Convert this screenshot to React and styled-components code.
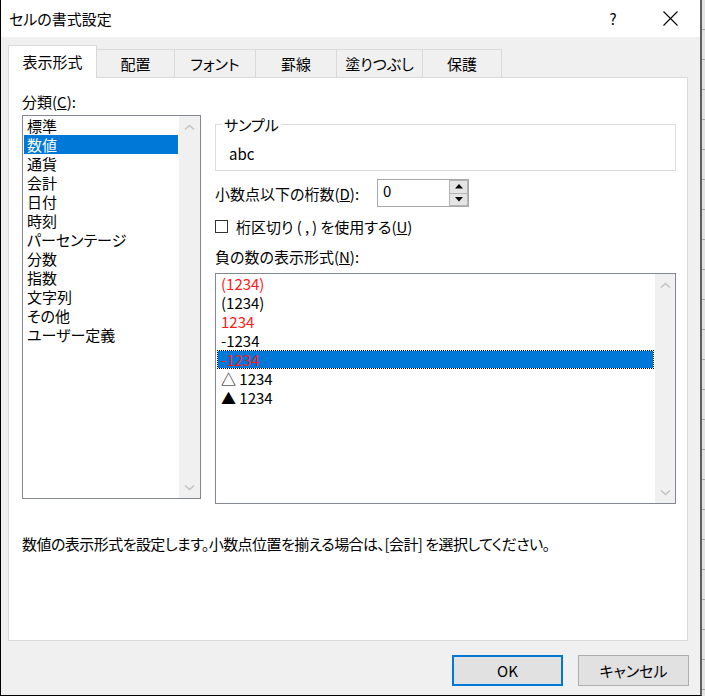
import React from 'react'
import styled, { createGlobalStyle } from 'styled-components'

const GlobalStyle = createGlobalStyle`
    html, body {
        margin: 0;
        padding: 0;
    }
    body {
        width: 705px;
        height: 696px;
        overflow: hidden;
        background: #d9d9d9;
        font-family: "Noto Sans CJK JP", "Noto Sans", sans-serif;
        font-size: 15px;
        font-feature-settings: "palt";
        color: #000;
    }
    * {
        box-sizing: border-box;
    }
`

const Screen = styled.div`
    display: flex;
    width: 705px;
    height: 696px;
`

const Window = styled.div`
    width: 702px;
    height: 696px;
    display: flex;
    flex-direction: column;
    background: #f0f0f0;
    border-left: 1px solid #000;
    border-bottom: 1px solid #000;
    border-right: 2px solid #5f5f5f;
`

const SheetEdge = styled.div`
    flex: 1;
    background: repeating-linear-gradient(
        to bottom,
        #e3e3e3 0,
        #e3e3e3 29px,
        #a8a8a8 29px,
        #a8a8a8 30px
    );
`

const TitleBar = styled.div`
    height: 37px;
    display: flex;
    align-items: center;
    background: #fff;
    padding: 0 7px 0 8px;
`

const Title = styled.span`
    flex: 1;
    line-height: 19px;
`

const CaptionButton = styled.div`
    width: 46px;
    height: 37px;
    display: flex;
    align-items: center;
    justify-content: center;
    margin-right: ${p => p.$gap || 0}px;
    font-size: 15px;
`

const Body = styled.div`
    flex: 1;
    display: flex;
    flex-direction: column;
    padding: 8px 12px 0 7px;
`

const TabRow = styled.div`
    display: flex;
    align-items: flex-end;
    height: 32px;
`

const Tab = styled.div`
    width: ${p => p.$w}px;
    height: ${p => (p.$active ? 33 : 28)}px;
    margin-left: ${p => (p.$first ? 0 : -1)}px;
    margin-bottom: ${p => (p.$active ? -1 : 0)}px;
    position: relative;
    z-index: ${p => (p.$active ? 2 : 1)};
    display: flex;
    align-items: center;
    justify-content: center;
    padding-bottom: ${p => (p.$active ? 2 : 0)}px;
    background: ${p => (p.$active ? '#fff' : '#f0f0f0')};
    border: 1px solid #d9d9d9;
    border-bottom: none;
    line-height: 19px;
`

const Panel = styled.div`
    height: 564px;
    background: #fff;
    border: 1px solid #d9d9d9;
    padding: 14px 11px 0 13px;
`

const Columns = styled.div`
    display: grid;
    grid-template-columns: 179px 461px;
    column-gap: 14px;
`

const Column = styled.div`
    display: flex;
    flex-direction: column;
    padding-top: ${p => p.$top || 0}px;
`

const Label = styled.div`
    line-height: 19px;
    height: 19px;
    margin-bottom: ${p => p.$gap || 0}px;
    white-space: nowrap;
`

const ListBox = styled.div`
    display: flex;
    height: ${p => p.$h}px;
    margin-top: ${p => p.$top || 0}px;
    border: 1px solid #828790;
    background: #fff;
`

const ListItems = styled.div`
    flex: 1;
    display: flex;
    flex-direction: column;
    padding-top: ${p => p.$top}px;
`

const ListItem = styled.div`
    height: 19px;
    line-height: 17px;
    margin: 0 1px;
    padding-left: ${p => p.$inset}px;
    border: 1px ${p => (p.$focus ? 'dotted #000' : 'solid transparent')};
    white-space: nowrap;
    color: ${p => (p.$red ? '#ff1a1a' : p.$selected && !p.$focus ? '#fff' : '#000')};
    background: ${p =>
        p.$focus
            ? 'linear-gradient(#0078d7, #0078d7) padding-box, #fff'
            : p.$selected
            ? '#0078d7'
            : 'transparent'};
`

const ScrollTrack = styled.div`
    width: ${p => p.$w}px;
    display: flex;
    flex-direction: column;
    justify-content: space-between;
    background: #f0f0f0;
`

const ArrowCell = styled.div`
    height: 22px;
    display: flex;
    align-items: center;
    justify-content: center;
`

const SampleGroup = styled.fieldset`
    margin: 0;
    min-width: 0;
    height: 56px;
    border: 1px solid #dcdcdc;
    padding: 0 13px 5px 13px;
`

const SampleLegend = styled.legend`
    margin-left: -7px;
    padding: 0 2px;
    line-height: 19px;
`

const SampleText = styled.div`
    line-height: 19px;
    padding-top: 10px;
`

const FieldRow = styled.div`
    display: flex;
    align-items: center;
    height: ${p => p.$h}px;
    margin-top: ${p => p.$top}px;
`

const FieldLabel = styled.div`
    width: 162px;
    line-height: 19px;
    white-space: nowrap;
`

const Spinner = styled.div`
    width: 92px;
    height: 28px;
    display: flex;
    border: 1px solid #a8a8a8;
    background: #fff;
`

const SpinValue = styled.div`
    flex: 1;
    padding-left: 5px;
    line-height: 22px;
`

const SpinButtons = styled.div`
    width: 19px;
    display: flex;
    flex-direction: column;
`

const SpinButton = styled.div`
    flex: 1;
    display: flex;
    align-items: center;
    justify-content: center;
    background: #e5e5e5;
    border: 1px solid #b4b4b4;
    margin-top: ${p => (p.$down ? -1 : 0)}px;
`

const CheckBox = styled.div`
    width: 13px;
    height: 13px;
    border: 1px solid #333;
    background: #fff;
    margin-right: 8px;
`

const CheckLabel = styled.div`
    line-height: 19px;
    white-space: nowrap;
`

const Gap = styled.span`
    display: inline-block;
    width: ${p => p.$w}px;
`

const Description = styled.div`
    margin-top: 30px;
    line-height: 19px;
    letter-spacing: -0.55px;
    white-space: nowrap;
`

const Footer = styled.div`
    display: flex;
    justify-content: flex-end;
    gap: 15px;
    margin: 14px -1px 0 0;
`

const Button = styled.div`
    width: 111px;
    height: 31px;
    display: flex;
    align-items: center;
    justify-content: center;
    background: #e1e1e1;
    border: ${p => (p.$default ? '2px solid #0078d7' : '1px solid #adadad')};
    line-height: 19px;
`

const Chevron = ({ down }) => (
    <svg width="11" height="7" viewBox="0 0 11 7">
        <polyline
            points={down ? '1,1.5 5.5,5.5 10,1.5' : '1,5.5 5.5,1.5 10,5.5'}
            fill="none"
            stroke="#c2c2c2"
            strokeWidth="1.6"
        />
    </svg>
)

const Triangle = ({ down }) => (
    <svg width="8" height="5" viewBox="0 0 8 5">
        <polygon points={down ? '0,0 8,0 4,4.5' : '0,4.5 8,4.5 4,0'} fill="#000" />
    </svg>
)

const ScrollBar = ({ width }) => (
    <ScrollTrack $w={width}>
        <ArrowCell>
            <Chevron />
        </ArrowCell>
        <ArrowCell>
            <Chevron down />
        </ArrowCell>
    </ScrollTrack>
)

const tabs = [
    { label: '表示形式', w: 89 },
    { label: '配置', w: 79 },
    { label: 'フォント', w: 82 },
    { label: '罫線', w: 82 },
    { label: '塗りつぶし', w: 87 },
    { label: '保護', w: 80 },
]

const categories = [
    '標準', '数値', '通貨', '会計', '日付', '時刻', 'パーセンテージ',
    '分数', '指数', '文字列', 'その他', 'ユーザー定義',
]

const negatives = [
    { text: '(1234)', red: true },
    { text: '(1234)' },
    { text: '1234', red: true },
    { text: '-1234' },
    { text: '-1234', red: true, focus: true },
    { text: '△ 1234' },
    { text: '▲ 1234' },
]

const App = () => {
    return (
        <Screen>
            <GlobalStyle />
            <Window>
                <TitleBar>
                    <Title>セルの書式設定</Title>
                    <CaptionButton $gap={11}>?</CaptionButton>
                    <CaptionButton>
                        <svg width="15" height="15" viewBox="0 0 15 15">
                            <path d="M0.5 0.5 L14.5 14.5 M14.5 0.5 L0.5 14.5" stroke="#000" strokeWidth="1.1" />
                        </svg>
                    </CaptionButton>
                </TitleBar>
                <Body>
                    <TabRow>
                        {tabs.map((t, i) => (
                            <Tab key={t.label} $w={t.w} $first={i === 0} $active={i === 0}>
                                {t.label}
                            </Tab>
                        ))}
                    </TabRow>
                    <Panel>
                        <Columns>
                            <Column>
                                <Label $gap={4}>
                                    分類(<u>C</u>):
                                </Label>
                                <ListBox $h={384}>
                                    <ListItems $top={0}>
                                        {categories.map((c, i) => (
                                            <ListItem key={c} $inset={2} $selected={i === 1}>
                                                {c}
                                            </ListItem>
                                        ))}
                                    </ListItems>
                                    <ScrollBar width={21} />
                                </ListBox>
                            </Column>
                            <Column $top={23}>
                                <SampleGroup>
                                    <SampleLegend>サンプル</SampleLegend>
                                    <SampleText>abc</SampleText>
                                </SampleGroup>
                                <FieldRow $h={28} $top={8}>
                                    <FieldLabel>
                                        小数点以下の桁数(<u>D</u>):
                                    </FieldLabel>
                                    <Spinner>
                                        <SpinValue>0</SpinValue>
                                        <SpinButtons>
                                            <SpinButton>
                                                <Triangle />
                                            </SpinButton>
                                            <SpinButton $down>
                                                <Triangle down />
                                            </SpinButton>
                                        </SpinButtons>
                                    </Spinner>
                                </FieldRow>
                                <FieldRow $h={20} $top={9}>
                                    <CheckBox />
                                    <CheckLabel>
                                        桁区切り (<Gap $w={3} />,<Gap $w={3} />) を使用する(<u>U</u>)
                                    </CheckLabel>
                                </FieldRow>
                                <FieldRow $h={19} $top={11}>
                                    <CheckLabel>
                                        負の数の表示形式(<u>N</u>):
                                    </CheckLabel>
                                </FieldRow>
                                <ListBox $h={231} $top={7}>
                                    <ListItems $top={0}>
                                        {negatives.map((n, i) => (
                                            <ListItem key={i} $inset={3} $red={n.red} $focus={n.focus} $selected={n.focus}>
                                                {n.text}
                                            </ListItem>
                                        ))}
                                    </ListItems>
                                    <ScrollBar width={20} />
                                </ListBox>
                            </Column>
                        </Columns>
                        <Description>
                            数値の表示形式を設定します。小数点位置を揃える場合は、[会計] を選択してください。
                        </Description>
                    </Panel>
                    <Footer>
                        <Button $default>OK</Button>
                        <Button>キャンセル</Button>
                    </Footer>
                </Body>
            </Window>
            <SheetEdge />
        </Screen>
    )
}

export default App
